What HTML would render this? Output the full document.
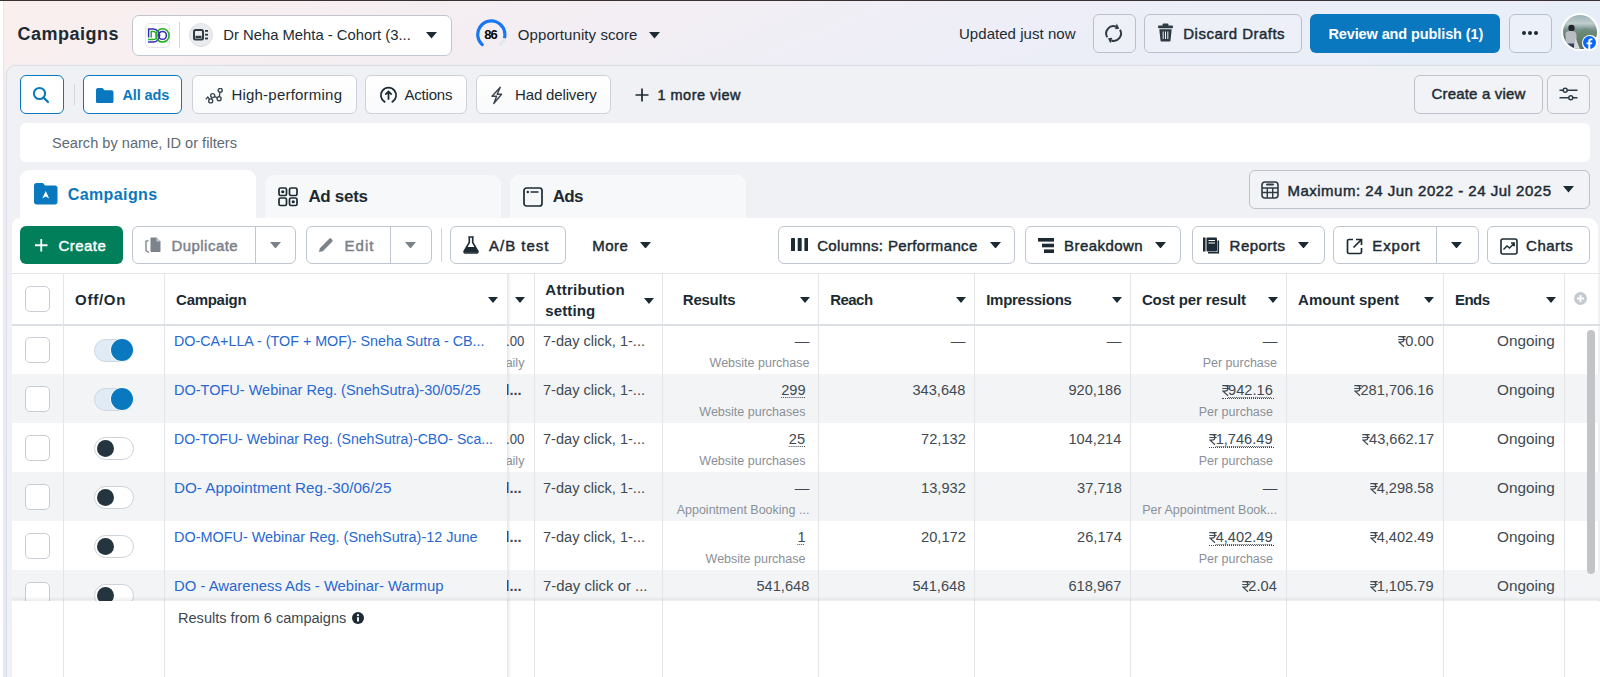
<!DOCTYPE html>
<html><head><meta charset="utf-8"><title>Campaigns</title>
<style>
html,body{margin:0;padding:0;width:1600px;height:677px;overflow:hidden;background:#fff;}
body{position:relative;font-family:"Liberation Sans", sans-serif;}
.t{white-space:nowrap;line-height:1;display:block;}
svg{display:block}
</style></head><body>
<div style="position:absolute;left:0;top:0;width:1600px;height:1px;background:#3b3030"></div><div style="position:absolute;left:4px;top:1px;width:1596px;height:676px;background:linear-gradient(to bottom right,#faefee 0%,#f3eef3 20%,#eeeef7 32%,#e8eef8 50%,#e6eef9 100%)"></div><div style="position:absolute;left:4px;top:65px;width:2px;height:612px;background:linear-gradient(180deg,#f7eef1 0%,#eeedf8 50%,#e3eefb 100%)"></div><div style="position:absolute;left:3px;top:1px;width:1px;height:676px;background:rgba(80,70,110,0.13)"></div><div style="position:absolute;left:6px;top:65px;width:1600px;height:620px;background:#eff1f4;border-top-left-radius:10px;border:1px solid #dcdfe5;box-shadow:0 0 3px rgba(0,0,0,0.05)"></div><div style="position:absolute;left:132px;top:14.5px;width:320px;height:41.5px;background:#fff;border:1px solid #bfc6cf;border-radius:7px;box-sizing:border-box"></div><div style="position:absolute;left:144.5px;top:22.5px;width:25.5px;height:25.5px;background:#fff;border:1px solid #e4e6ea;border-radius:5px;box-sizing:border-box"></div><svg style="position:absolute;left:144px;top:22px" width="28" height="26" viewBox="0 0 28 26"><path d="M4.6 15.5V6.9H9A6.6 6.6 0 0 1 9 20.1H4" fill="none" stroke="#3a2db8" stroke-width="1.5"/><path d="M7.2 15.5V9.4H9A4.1 4.1 0 0 1 9 17.6H4" fill="none" stroke="#22b021" stroke-width="1.5"/><circle cx="18.5" cy="13.4" r="6.6" fill="none" stroke="#22b021" stroke-width="1.6"/><circle cx="18.5" cy="13.4" r="3.9" fill="none" stroke="#3a2db8" stroke-width="1.6"/></svg><div style="position:absolute;left:178.5px;top:22px;width:1px;height:26px;background:#d5d8dd"></div><div style="position:absolute;left:189px;top:23px;width:24px;height:24px;background:#e9ebef;border-radius:50%;border:1px solid #dde0e5;box-sizing:border-box"></div><svg style="position:absolute;left:193px;top:29px" width="16" height="12" viewBox="0 0 16 12"><rect x="1" y="1" width="9" height="9.5" rx="1.5" fill="none" stroke="#2f3b44" stroke-width="2"/><rect x="2.5" y="6.8" width="6" height="2.2" fill="#2f3b44"/><rect x="12" y="1" width="3" height="1.8" fill="#2f3b44"/><rect x="12" y="4.8" width="3" height="1.8" fill="#2f3b44"/><rect x="12" y="8.6" width="3" height="1.8" fill="#2f3b44"/></svg><svg style="position:absolute;left:426.3px;top:32.25px" width="11" height="6.5" viewBox="0 0 11 6.5"><path d="M0 0H11L5.5 6.5Z" fill="#1c2b33"/></svg><svg style="position:absolute;left:475px;top:19px" width="34" height="31" viewBox="0 0 34 31"><path d="M7.20 25.61A13.6 13.6 0 1 1 29.60 18.33" fill="none" stroke="#1877f2" stroke-width="3.2" stroke-linecap="round"/><path d="M28.91 20.59A13.6 13.6 0 0 1 25.58 25.45" fill="none" stroke="#e3e8ef" stroke-width="3.2" stroke-linecap="round"/></svg><svg style="position:absolute;left:649.0px;top:32.25px" width="11" height="6.5" viewBox="0 0 11 6.5"><path d="M0 0H11L5.5 6.5Z" fill="#1c2b33"/></svg><div style="position:absolute;left:1093px;top:13.8px;width:43px;height:39px;border:1px solid #b9c0c9;border-radius:6px;box-sizing:border-box;background:rgba(255,255,255,0.15)"></div><svg style="position:absolute;left:1104px;top:23px" width="20" height="20" viewBox="0 0 20 20"><path d="M11.89 3.46A7.4 7.4 0 0 0 3.19 14.20" fill="none" stroke="#2f3b44" stroke-width="2"/><path d="M10.96 6.32L12.81 0.61L15.27 5.74Z" fill="#2f3b44"/><path d="M7.31 17.54A7.4 7.4 0 0 0 16.01 6.80" fill="none" stroke="#2f3b44" stroke-width="2"/><path d="M8.24 14.68L6.39 20.39L3.93 15.26Z" fill="#2f3b44"/></svg><div style="position:absolute;left:1143.6px;top:13.8px;width:158px;height:39px;border:1px solid #b9c0c9;border-radius:6px;box-sizing:border-box;background:rgba(255,255,255,0.15)"></div><svg style="position:absolute;left:1157px;top:23px" width="17" height="19" viewBox="0 0 17 19"><rect x="5.5" y="0.5" width="6" height="2.5" rx="1" fill="#2f3b44"/><rect x="1" y="2.6" width="15" height="2.6" rx="1" fill="#2f3b44"/><path d="M2.3 6.2H14.7L13.5 17.6C13.4 18.3 12.9 18.6 12.3 18.6H4.7C4.1 18.6 3.6 18.3 3.5 17.6Z" fill="#2f3b44"/><path d="M6.2 8.5V16M8.5 8.5V16M10.8 8.5V16" stroke="#eef0f5" stroke-width="1"/></svg><div style="position:absolute;left:1310px;top:13.6px;width:190px;height:39px;background:#0a78be;border-radius:6px"></div><div style="position:absolute;left:1509.3px;top:13.8px;width:42.6px;height:39px;border:1px solid #b9c0c9;border-radius:6px;box-sizing:border-box;background:rgba(255,255,255,0.15)"></div><svg style="position:absolute;left:1521px;top:30px" width="18" height="6" viewBox="0 0 18 6"><circle cx="3" cy="3" r="2" fill="#1c2b33"/><circle cx="9" cy="3" r="2" fill="#1c2b33"/><circle cx="15" cy="3" r="2" fill="#1c2b33"/></svg><div style="position:absolute;left:1561px;top:13px;width:38px;height:38px;background:#fff;border-radius:50%"></div><svg style="position:absolute;left:1563px;top:15px" width="34" height="34" viewBox="0 0 34 34"><defs><clipPath id="av"><circle cx="17" cy="17" r="17"/></clipPath><linearGradient id="sky" x1="0" y1="0" x2="0" y2="1"><stop offset="0" stop-color="#9db3b8"/><stop offset="0.25" stop-color="#bfcdcc"/><stop offset="0.42" stop-color="#7d9592"/><stop offset="0.65" stop-color="#5a7361"/><stop offset="1" stop-color="#2c3633"/></linearGradient></defs><g clip-path="url(#av)"><rect width="34" height="34" fill="url(#sky)"/><path d="M12 19L22 13L34 17V34H12Z" fill="#6b8a72" opacity="0.7"/><circle cx="8.5" cy="13" r="3.2" fill="#25262b"/><path d="M2.5 18C3 16.5 5.5 16 8.5 16C11.5 16 13.5 17.5 13.5 20V34H2.5Z" fill="#b9bcc0"/><path d="M12.5 23L17 34H11Z" fill="#d6d8d9"/><path d="M4 28.5H11V34H4Z" fill="#2f4060"/></g></svg><div style="position:absolute;left:1581.5px;top:34.5px;width:16px;height:16px;background:#fff;border-radius:50%"></div><svg style="position:absolute;left:1583px;top:36px" width="13" height="13" viewBox="0 0 13 13"><circle cx="6.5" cy="6.5" r="6.5" fill="#0866ff"/><path d="M7.3 13V8.3H9L9.3 6.4H7.3V5.3C7.3 4.7 7.6 4.3 8.4 4.3H9.4V2.6C9.1 2.6 8.5 2.5 7.8 2.5C6.3 2.5 5.3 3.4 5.3 5V6.4H3.6V8.3H5.3V13Z" fill="#fff"/></svg><div style="position:absolute;left:19.5px;top:75.2px;width:44.7px;height:39px;background:#fff;border:1.5px solid #0a78be;border-radius:6px;box-sizing:border-box"></div><svg style="position:absolute;left:32px;top:86px" width="18" height="18" viewBox="0 0 18 18"><circle cx="7.5" cy="7.5" r="5.6" fill="none" stroke="#0a78be" stroke-width="2"/><path d="M11.6 11.6L16 16" stroke="#0a78be" stroke-width="2.2" stroke-linecap="round"/></svg><div style="position:absolute;left:73.5px;top:84px;width:1px;height:21px;background:#d3d7dc"></div><div style="position:absolute;left:83.2px;top:75.2px;width:99.2px;height:39.3px;background:#fff;border:1.5px solid #0a78be;border-radius:6px;box-sizing:border-box"></div><svg style="position:absolute;left:96px;top:87.5px" width="17.5" height="15.5" viewBox="0 0 17.5 15.5"><path d="M0 2C0 0.9 0.9 0 2 0H6.5L8.5 2.2H15.5C16.6 2.2 17.5 3.1 17.5 4.2V13.5C17.5 14.6 16.6 15.5 15.5 15.5H2C0.9 15.5 0 14.6 0 13.5Z" fill="#0a78be"/></svg><div style="position:absolute;left:192px;top:75.3px;width:164.5px;height:39px;background:linear-gradient(180deg,#ffffff,#f9fafb);border:1px solid #cdd2d9;border-radius:6px;box-sizing:border-box"></div><div style="position:absolute;left:365px;top:75.3px;width:101.80000000000001px;height:39px;background:linear-gradient(180deg,#ffffff,#f9fafb);border:1px solid #cdd2d9;border-radius:6px;box-sizing:border-box"></div><div style="position:absolute;left:475.5px;top:75.3px;width:135.0px;height:39px;background:linear-gradient(180deg,#ffffff,#f9fafb);border:1px solid #cdd2d9;border-radius:6px;box-sizing:border-box"></div><svg style="position:absolute;left:204.5px;top:87.5px" width="18" height="16" viewBox="0 0 18 16"><path d="M0.8 11.3L2.8 9.1L5.7 12.9L7.7 7.6L14.1 10.7L15.2 2.3" fill="none" stroke="#3b4650" stroke-width="1.3"/><circle cx="5.7" cy="12.9" r="2" fill="#fff" stroke="#3b4650" stroke-width="1.4"/><circle cx="7.7" cy="7.6" r="2" fill="#fff" stroke="#3b4650" stroke-width="1.4"/><circle cx="14.1" cy="10.7" r="2" fill="#fff" stroke="#3b4650" stroke-width="1.4"/><circle cx="15.2" cy="2.3" r="2" fill="#fff" stroke="#3b4650" stroke-width="1.4"/></svg><svg style="position:absolute;left:379px;top:86px" width="19" height="19" viewBox="0 0 19 19"><path d="M5.7 15.9A7.6 7.6 0 1 1 13.3 15.9" fill="none" stroke="#1c2b33" stroke-width="1.8" stroke-linecap="round"/><path d="M9.5 13.8V5.6M6.3 8.6L9.5 5.4L12.7 8.6" fill="none" stroke="#1c2b33" stroke-width="1.8"/></svg><svg style="position:absolute;left:489px;top:86px" width="15" height="19" viewBox="0 0 15 19"><path d="M11.3 1.3L3 10.3H7.6L4.8 17.5L12.6 8.3H8.2Z" fill="none" stroke="#3b4650" stroke-width="1.4" stroke-linejoin="round"/></svg><svg style="position:absolute;left:634.5px;top:88px" width="14" height="14" viewBox="0 0 14 14"><path d="M7 0.5V13.5M0.5 7H13.5" stroke="#1c2b33" stroke-width="1.7"/></svg><div style="position:absolute;left:1414px;top:75px;width:128.6px;height:38.5px;border:1px solid #bcc3cc;border-radius:6px;box-sizing:border-box;background:rgba(255,255,255,0.2)"></div><div style="position:absolute;left:1547px;top:75px;width:42.5px;height:38.5px;border:1px solid #bcc3cc;border-radius:6px;box-sizing:border-box;background:rgba(255,255,255,0.2)"></div><svg style="position:absolute;left:1559px;top:86px" width="19" height="16" viewBox="0 0 19 16"><path d="M0.5 4.2H4.2M8.2 4.2H18.5M0.5 11.7H9.8M13.8 11.7H18.5" stroke="#2f3b44" stroke-width="1.5"/><circle cx="6.2" cy="4.2" r="2" fill="none" stroke="#2f3b44" stroke-width="1.5"/><circle cx="11.8" cy="11.7" r="2" fill="none" stroke="#2f3b44" stroke-width="1.5"/></svg><div style="position:absolute;left:19.5px;top:123.3px;width:1570.5px;height:39px;background:#fff;border-radius:6px"></div><div style="position:absolute;left:264.7px;top:174.8px;width:236.5px;height:50px;background:#f7f8fa;border-radius:9px 9px 0 0"></div><div style="position:absolute;left:509.7px;top:174.8px;width:236.5px;height:50px;background:#f7f8fa;border-radius:9px 9px 0 0"></div><div style="position:absolute;left:1248.5px;top:170.4px;width:341.1px;height:38.2px;border:1px solid #bcc3cc;border-radius:6px;box-sizing:border-box;background:rgba(255,255,255,0.2)"></div><div style="position:absolute;left:12px;top:217.5px;width:1586px;height:470px;background:#fff;border-radius:8px 10px 0 0"></div><div style="position:absolute;left:19.5px;top:170.2px;width:236.3px;height:60px;background:#fff;border-radius:9px 9px 0 0"></div><svg style="position:absolute;left:34px;top:183px" width="23.5" height="21.5" viewBox="0 0 23.5 21.5"><path d="M0 2.5C0 1.1 1.1 0 2.5 0H9L11 2.5H21C22.4 2.5 23.5 3.6 23.5 5V19C23.5 20.4 22.4 21.5 21 21.5H2.5C1.1 21.5 0 20.4 0 19Z" fill="#0a78be"/><path d="M11.75 8L15.2 15.5L11.75 13.6L8.3 15.5Z" fill="#fff"/></svg><svg style="position:absolute;left:278px;top:186.7px" width="21" height="20" viewBox="0 0 21 20"><rect x="1" y="1" width="7.5" height="7.5" rx="1.5" fill="none" stroke="#1c2b33" stroke-width="1.7"/><rect x="11.5" y="1" width="7.5" height="7.5" rx="1.5" fill="none" stroke="#1c2b33" stroke-width="1.7"/><rect x="1" y="11" width="7.5" height="7.5" rx="1.5" fill="none" stroke="#1c2b33" stroke-width="1.7"/><rect x="11.5" y="11" width="7.5" height="7.5" rx="1.5" fill="none" stroke="#1c2b33" stroke-width="1.7"/><circle cx="4.75" cy="4.75" r="1.6" fill="#1c2b33"/><circle cx="15.25" cy="14.75" r="1.6" fill="#1c2b33"/></svg><svg style="position:absolute;left:523px;top:186.5px" width="20" height="20" viewBox="0 0 20 20"><rect x="1" y="1" width="18" height="18" rx="2.5" fill="none" stroke="#1c2b33" stroke-width="1.7"/><circle cx="4.8" cy="5" r="1.2" fill="#1c2b33"/><path d="M7.5 5H15.5" stroke="#1c2b33" stroke-width="1.5"/></svg><svg style="position:absolute;left:1261px;top:181px" width="18" height="18" viewBox="0 0 18 18"><rect x="1" y="1" width="16" height="16" rx="3" fill="none" stroke="#2f3b44" stroke-width="1.6"/><rect x="5" y="2.5" width="8" height="2" rx="1" fill="#2f3b44"/><path d="M1 7H17M1 11.5H17M6.3 7V17M11.7 7V17" stroke="#2f3b44" stroke-width="1.4"/></svg><svg style="position:absolute;left:1563.0px;top:186.25px" width="11" height="6.5" viewBox="0 0 11 6.5"><path d="M0 0H11L5.5 6.5Z" fill="#1c2b33"/></svg><div style="position:absolute;left:19.8px;top:225.9px;width:103px;height:38px;background:#007f5a;border-radius:6px"></div><svg style="position:absolute;left:35px;top:239px" width="12.5" height="12.5" viewBox="0 0 12.5 12.5"><path d="M6.25 0V12.5M0 6.25H12.5" stroke="#fff" stroke-width="1.8"/></svg><div style="position:absolute;left:132.2px;top:226px;width:164.2px;height:38px;border:1px solid #bfc6cf;border-radius:6px;box-sizing:border-box;background:#fff"></div><div style="position:absolute;left:254.6px;top:227px;width:1px;height:36px;background:#bfc6cf"></div><svg style="position:absolute;left:144px;top:237px" width="18" height="16" viewBox="0 0 18 16"><path d="M4.5 3.5L2 4.3V13.5L5 15.5" fill="none" stroke="#8a8f96" stroke-width="1.5"/><path d="M6.5 1.3C6.5 0.8 6.9 0.5 7.4 0.5H12.5L16.5 4.5V14C16.5 14.5 16.1 15 15.5 15H7.5C6.9 15 6.5 14.5 6.5 14Z" fill="#7d838a"/><path d="M12.5 0.5V4.5H16.5" fill="#c8ccd1"/></svg><svg style="position:absolute;left:270.1px;top:241.95px" width="11" height="6.5" viewBox="0 0 11 6.5"><path d="M0 0H11L5.5 6.5Z" fill="#7b8189"/></svg><div style="position:absolute;left:306px;top:226px;width:125.80000000000001px;height:38px;border:1px solid #bfc6cf;border-radius:6px;box-sizing:border-box;background:#fff"></div><div style="position:absolute;left:390px;top:227px;width:1px;height:36px;background:#bfc6cf"></div><svg style="position:absolute;left:318px;top:237px" width="16" height="16" viewBox="0 0 16 16"><path d="M1 15L1.8 11.2L11.2 1.8C11.8 1.2 12.7 1.2 13.3 1.8L14.2 2.7C14.8 3.3 14.8 4.2 14.2 4.8L4.8 14.2Z" fill="#7d838a"/></svg><svg style="position:absolute;left:404.7px;top:241.95px" width="11" height="6.5" viewBox="0 0 11 6.5"><path d="M0 0H11L5.5 6.5Z" fill="#7b8189"/></svg><div style="position:absolute;left:440.5px;top:228px;width:1px;height:34px;background:#d3d7dc"></div><div style="position:absolute;left:450.1px;top:226px;width:115.5px;height:38px;border:1px solid #bfc6cf;border-radius:6px;box-sizing:border-box;background:#fff"></div><svg style="position:absolute;left:463px;top:236px" width="16" height="18" viewBox="0 0 16 18"><path d="M5.3 1H10.7M6.3 1V6.5L1.2 15.2C0.8 16 1.3 17 2.2 17H13.8C14.7 17 15.2 16 14.8 15.2L9.7 6.5V1" fill="none" stroke="#1c2b33" stroke-width="1.6"/><path d="M3.6 11H12.4L14.6 15.6C14.9 16.2 14.6 16.6 14 16.6H2C1.4 16.6 1.1 16.2 1.4 15.6Z" fill="#1c2b33"/></svg><svg style="position:absolute;left:639.8px;top:241.95px" width="11" height="6.5" viewBox="0 0 11 6.5"><path d="M0 0H11L5.5 6.5Z" fill="#1c2b33"/></svg><div style="position:absolute;left:778.4px;top:226px;width:237.0px;height:38px;border:1px solid #bfc6cf;border-radius:6px;box-sizing:border-box;background:#fff"></div><div style="position:absolute;left:1025.4px;top:226px;width:155.89999999999986px;height:38px;border:1px solid #bfc6cf;border-radius:6px;box-sizing:border-box;background:#fff"></div><div style="position:absolute;left:1191.5px;top:226px;width:133.0999999999999px;height:38px;border:1px solid #bfc6cf;border-radius:6px;box-sizing:border-box;background:#fff"></div><div style="position:absolute;left:1487.2px;top:226px;width:102.5px;height:38px;border:1px solid #bfc6cf;border-radius:6px;box-sizing:border-box;background:#fff"></div><div style="position:absolute;left:1332.9px;top:226px;width:145.69999999999982px;height:38px;border:1px solid #bfc6cf;border-radius:6px;box-sizing:border-box;background:#fff"></div><div style="position:absolute;left:1436.1px;top:227px;width:1px;height:36px;background:#bfc6cf"></div><svg style="position:absolute;left:790.5px;top:238.3px" width="17.5" height="13.2" viewBox="0 0 17.5 13.2"><rect x="0" y="0" width="4" height="13.2" rx="0.8" fill="#1c2b33"/><rect x="6.7" y="0" width="4" height="13.2" rx="0.8" fill="#1c2b33"/><rect x="13.4" y="0" width="4" height="13.2" rx="0.8" fill="#1c2b33"/></svg><svg style="position:absolute;left:990.0px;top:241.95px" width="11" height="6.5" viewBox="0 0 11 6.5"><path d="M0 0H11L5.5 6.5Z" fill="#1c2b33"/></svg><svg style="position:absolute;left:1038px;top:237.5px" width="16.5" height="15" viewBox="0 0 16.5 15"><rect x="0" y="0" width="16" height="3.6" fill="#1c2b33"/><rect x="4" y="5.7" width="12" height="3.6" fill="#1c2b33"/><rect x="6" y="11.4" width="10" height="3.6" fill="#1c2b33"/></svg><svg style="position:absolute;left:1154.9px;top:241.95px" width="11" height="6.5" viewBox="0 0 11 6.5"><path d="M0 0H11L5.5 6.5Z" fill="#1c2b33"/></svg><svg style="position:absolute;left:1202.5px;top:236.5px" width="18" height="17" viewBox="0 0 18 17"><rect x="0" y="0.5" width="2.5" height="14" fill="#1c2b33"/><rect x="3.5" y="0.5" width="10.5" height="14" rx="1" fill="#1c2b33"/><path d="M5.5 3.5H12M5.5 6H12" stroke="#fff" stroke-width="1.1"/><path d="M15.3 3.5V15.8H5" fill="none" stroke="#1c2b33" stroke-width="1.6"/></svg><svg style="position:absolute;left:1297.5px;top:241.95px" width="11" height="6.5" viewBox="0 0 11 6.5"><path d="M0 0H11L5.5 6.5Z" fill="#1c2b33"/></svg><svg style="position:absolute;left:1346px;top:237.5px" width="17" height="17" viewBox="0 0 17 17"><path d="M7 1.5H3C2.2 1.5 1.5 2.2 1.5 3V14C1.5 14.8 2.2 15.5 3 15.5H14C14.8 15.5 15.5 14.8 15.5 14V10" fill="none" stroke="#1c2b33" stroke-width="1.7"/><path d="M7.5 9.5L15 2M10 1.5H15.5V7" fill="none" stroke="#1c2b33" stroke-width="1.7"/></svg><svg style="position:absolute;left:1451.3px;top:241.95px" width="11" height="6.5" viewBox="0 0 11 6.5"><path d="M0 0H11L5.5 6.5Z" fill="#1c2b33"/></svg><svg style="position:absolute;left:1499.5px;top:237.5px" width="18" height="17" viewBox="0 0 18 17"><rect x="1" y="1" width="16" height="15" rx="2" fill="none" stroke="#1c2b33" stroke-width="1.6"/><path d="M3.5 11.5L7 8L9.5 10L14 5.5M11 5H14.2V8.2" fill="none" stroke="#1c2b33" stroke-width="1.4"/></svg><div style="position:absolute;left:11.6px;top:273.4px;width:1590px;height:1px;background:#e3e5e9"></div><div style="position:absolute;left:11.6px;top:324.4px;width:1590px;height:1.5px;background:#dcdfe3"></div><div style="position:absolute;left:11.6px;top:374.4px;width:1590px;height:49px;background:#f3f4f6"></div><div style="position:absolute;left:11.6px;top:472.4px;width:1590px;height:49px;background:#f3f4f6"></div><div style="position:absolute;left:11.6px;top:570.4px;width:1590px;height:30.100000000000023px;background:#f3f4f6"></div><div style="position:absolute;left:63px;top:273.4px;width:1px;height:403.6px;background:#e3e5e9"></div><div style="position:absolute;left:164.2px;top:273.4px;width:1px;height:403.6px;background:#e3e5e9"></div><div style="position:absolute;left:533.8px;top:273.4px;width:1px;height:403.6px;background:#e3e5e9"></div><div style="position:absolute;left:662.3px;top:273.4px;width:1px;height:403.6px;background:#e3e5e9"></div><div style="position:absolute;left:818.4px;top:273.4px;width:1px;height:403.6px;background:#e3e5e9"></div><div style="position:absolute;left:974.3px;top:273.4px;width:1px;height:403.6px;background:#e3e5e9"></div><div style="position:absolute;left:1130.3px;top:273.4px;width:1px;height:403.6px;background:#e3e5e9"></div><div style="position:absolute;left:1286px;top:273.4px;width:1px;height:403.6px;background:#e3e5e9"></div><div style="position:absolute;left:1442.7px;top:273.4px;width:1px;height:403.6px;background:#e3e5e9"></div><div style="position:absolute;left:1563.9px;top:273.4px;width:1px;height:403.6px;background:#e3e5e9"></div><div style="position:absolute;left:507px;top:273.4px;width:4px;height:403.6px;background:linear-gradient(90deg,#e3e5e9,rgba(230,232,236,0))"></div><div style="position:absolute;left:25.3px;top:286.2px;width:24.5px;height:25.5px;border:1px solid #c9cdd3;border-radius:5px;box-sizing:border-box;background:#fff"></div><svg style="position:absolute;left:488.2px;top:296.5px" width="10" height="6" viewBox="0 0 10 6"><path d="M0 0H10L5.0 6Z" fill="#1c2b33"/></svg><svg style="position:absolute;left:515.0px;top:296.5px" width="10" height="6" viewBox="0 0 10 6"><path d="M0 0H10L5.0 6Z" fill="#1c2b33"/></svg><svg style="position:absolute;left:644.3px;top:297.5px" width="10" height="6" viewBox="0 0 10 6"><path d="M0 0H10L5.0 6Z" fill="#1c2b33"/></svg><svg style="position:absolute;left:800.2px;top:296.5px" width="10" height="6" viewBox="0 0 10 6"><path d="M0 0H10L5.0 6Z" fill="#1c2b33"/></svg><svg style="position:absolute;left:956.0px;top:296.5px" width="10" height="6" viewBox="0 0 10 6"><path d="M0 0H10L5.0 6Z" fill="#1c2b33"/></svg><svg style="position:absolute;left:1112.2px;top:296.5px" width="10" height="6" viewBox="0 0 10 6"><path d="M0 0H10L5.0 6Z" fill="#1c2b33"/></svg><svg style="position:absolute;left:1268.0px;top:296.5px" width="10" height="6" viewBox="0 0 10 6"><path d="M0 0H10L5.0 6Z" fill="#1c2b33"/></svg><svg style="position:absolute;left:1423.8px;top:296.5px" width="10" height="6" viewBox="0 0 10 6"><path d="M0 0H10L5.0 6Z" fill="#1c2b33"/></svg><svg style="position:absolute;left:1545.6px;top:296.5px" width="10" height="6" viewBox="0 0 10 6"><path d="M0 0H10L5.0 6Z" fill="#1c2b33"/></svg><svg style="position:absolute;left:1574px;top:292.3px" width="13" height="13" viewBox="0 0 13 13"><circle cx="6.5" cy="6.5" r="6.5" fill="#c5cad1"/><path d="M6.5 3V10M3 6.5H10" stroke="#fff" stroke-width="1.8"/></svg><div style="position:absolute;left:25.3px;top:337.2px;width:24.5px;height:25.5px;border:1px solid #c9cdd3;border-radius:5px;box-sizing:border-box;background:#fff"></div><div style="position:absolute;left:93.6px;top:338.7px;width:40px;height:23px;background:#e1ebf5;border:1px solid #cfd8e1;border-radius:12px;box-sizing:border-box"></div><div style="position:absolute;left:111.3px;top:338.59999999999997px;width:22px;height:22px;background:#0a78be;border-radius:50%;box-shadow:0 0 0 0.8px #fff"></div><div style="position:absolute;left:507px;top:325.4px;width:27px;height:49px;overflow:hidden"><span class="t" style="position:absolute;right:9.600000000000023px;top:8.05px;font-size:15.3px;color:#414a52;transform:scaleX(0.86);transform-origin:right center">.00</span><span class="t" style="position:absolute;right:9.600000000000023px;top:31.22px;font-size:12.5px;color:#8a9098">aily</span></div><div style="position:absolute;left:25.3px;top:386.2px;width:24.5px;height:25.5px;border:1px solid #c9cdd3;border-radius:5px;box-sizing:border-box;background:#fff"></div><div style="position:absolute;left:93.6px;top:387.7px;width:40px;height:23px;background:#e1ebf5;border:1px solid #cfd8e1;border-radius:12px;box-sizing:border-box"></div><div style="position:absolute;left:111.3px;top:387.59999999999997px;width:22px;height:22px;background:#0a78be;border-radius:50%;box-shadow:0 0 0 0.8px #fff"></div><div style="position:absolute;left:507px;top:374.4px;width:27px;height:49px;overflow:hidden"><span class="t" style="position:absolute;right:12.399999999999977px;top:8.64px;font-size:14.6px;font-weight:700;color:#414a52">d...</span></div><div style="position:absolute;left:25.3px;top:435.2px;width:24.5px;height:25.5px;border:1px solid #c9cdd3;border-radius:5px;box-sizing:border-box;background:#fff"></div><div style="position:absolute;left:93.6px;top:436.9px;width:40px;height:23px;background:#fff;border:1px solid #cdd3da;border-radius:12px;box-sizing:border-box"></div><div style="position:absolute;left:96.8px;top:439.9px;width:17px;height:17px;background:#25353f;border-radius:50%"></div><div style="position:absolute;left:507px;top:423.4px;width:27px;height:49px;overflow:hidden"><span class="t" style="position:absolute;right:9.600000000000023px;top:8.05px;font-size:15.3px;color:#414a52;transform:scaleX(0.86);transform-origin:right center">.00</span><span class="t" style="position:absolute;right:9.600000000000023px;top:31.22px;font-size:12.5px;color:#8a9098">aily</span></div><div style="position:absolute;left:25.3px;top:484.2px;width:24.5px;height:25.5px;border:1px solid #c9cdd3;border-radius:5px;box-sizing:border-box;background:#fff"></div><div style="position:absolute;left:93.6px;top:485.9px;width:40px;height:23px;background:#fff;border:1px solid #cdd3da;border-radius:12px;box-sizing:border-box"></div><div style="position:absolute;left:96.8px;top:488.9px;width:17px;height:17px;background:#25353f;border-radius:50%"></div><div style="position:absolute;left:507px;top:472.4px;width:27px;height:49px;overflow:hidden"><span class="t" style="position:absolute;right:12.399999999999977px;top:8.64px;font-size:14.6px;font-weight:700;color:#414a52">d...</span></div><div style="position:absolute;left:25.3px;top:533.1999999999999px;width:24.5px;height:25.5px;border:1px solid #c9cdd3;border-radius:5px;box-sizing:border-box;background:#fff"></div><div style="position:absolute;left:93.6px;top:534.9px;width:40px;height:23px;background:#fff;border:1px solid #cdd3da;border-radius:12px;box-sizing:border-box"></div><div style="position:absolute;left:96.8px;top:537.9px;width:17px;height:17px;background:#25353f;border-radius:50%"></div><div style="position:absolute;left:507px;top:521.4px;width:27px;height:49px;overflow:hidden"><span class="t" style="position:absolute;right:12.399999999999977px;top:8.64px;font-size:14.6px;font-weight:700;color:#414a52">d...</span></div><div style="position:absolute;left:25.3px;top:582.1999999999999px;width:24.5px;height:25.5px;border:1px solid #c9cdd3;border-radius:5px;box-sizing:border-box;background:#fff"></div><div style="position:absolute;left:93.6px;top:583.9px;width:40px;height:23px;background:#fff;border:1px solid #cdd3da;border-radius:12px;box-sizing:border-box"></div><div style="position:absolute;left:96.8px;top:586.9px;width:17px;height:17px;background:#25353f;border-radius:50%"></div><div style="position:absolute;left:507px;top:570.4px;width:27px;height:49px;overflow:hidden"><span class="t" style="position:absolute;right:12.399999999999977px;top:8.64px;font-size:14.6px;font-weight:700;color:#414a52">d...</span></div><div style="position:absolute;left:11.6px;top:600.5px;width:1590px;height:77px;background:#fff"></div><div style="position:absolute;left:11.6px;top:595.5px;width:1590px;height:5px;background:linear-gradient(180deg,rgba(0,0,0,0),rgba(0,0,0,0.07))"></div><div style="position:absolute;left:63px;top:600.5px;width:1px;height:77px;background:#e3e5e9"></div><div style="position:absolute;left:164.2px;top:600.5px;width:1px;height:77px;background:#e3e5e9"></div><div style="position:absolute;left:533.8px;top:600.5px;width:1px;height:77px;background:#e3e5e9"></div><div style="position:absolute;left:662.3px;top:600.5px;width:1px;height:77px;background:#e3e5e9"></div><div style="position:absolute;left:818.4px;top:600.5px;width:1px;height:77px;background:#e3e5e9"></div><div style="position:absolute;left:974.3px;top:600.5px;width:1px;height:77px;background:#e3e5e9"></div><div style="position:absolute;left:1130.3px;top:600.5px;width:1px;height:77px;background:#e3e5e9"></div><div style="position:absolute;left:1286px;top:600.5px;width:1px;height:77px;background:#e3e5e9"></div><div style="position:absolute;left:1442.7px;top:600.5px;width:1px;height:77px;background:#e3e5e9"></div><div style="position:absolute;left:1563.9px;top:600.5px;width:1px;height:77px;background:#e3e5e9"></div><div style="position:absolute;left:507px;top:600.5px;width:4px;height:77px;background:linear-gradient(90deg,#e3e5e9,rgba(230,232,236,0))"></div><svg style="position:absolute;left:351.5px;top:611.7px" width="12" height="12" viewBox="0 0 12 12"><circle cx="6" cy="6" r="6" fill="#1c2b33"/><circle cx="6" cy="3.2" r="1.1" fill="#fff"/><path d="M6 5.3V9.5" stroke="#fff" stroke-width="1.9"/></svg><div style="position:absolute;left:1587px;top:329.8px;width:7.5px;height:244.5px;background:#c2c4c7;border-radius:4px"></div>
<span id="t0" class="t" style="position:absolute;top:24.51px;font-size:18px;font-weight:700;color:#1c2b33;letter-spacing:0.496px;;left:17.50px;">Campaigns</span><span id="t1" class="t" style="position:absolute;top:28.27px;font-size:14.8px;font-weight:400;color:#1c2b33;letter-spacing:0.000px;;left:223.30px;">Dr Neha Mehta - Cohort (3...</span><span id="t2" class="t" style="position:absolute;top:27.70px;font-size:13px;font-weight:700;color:#050505;letter-spacing:-0.969px;;left:484.30px;">86</span><span id="t3" class="t" style="position:absolute;top:26.90px;font-size:15px;font-weight:400;color:#1c2b33;letter-spacing:0.076px;;left:517.80px;">Opportunity score</span><span id="t4" class="t" style="position:absolute;top:25.50px;font-size:15px;font-weight:400;color:#1c2b33;letter-spacing:0.040px;;left:959.00px;">Updated just now</span><span id="t5" class="t" style="position:absolute;top:26.20px;font-size:15px;font-weight:400;-webkit-text-stroke:0.45px #1c2b33;color:#1c2b33;letter-spacing:0.482px;;left:1183.30px;">Discard Drafts</span><span id="t6" class="t" style="position:absolute;top:26.63px;font-size:14.5px;font-weight:700;color:#ffffff;letter-spacing:-0.105px;;left:1328.40px;">Review and publish (1)</span><span id="t7" class="t" style="position:absolute;top:87.73px;font-size:14.5px;font-weight:700;color:#0a78be;letter-spacing:-0.133px;;left:122.50px;">All ads</span><span id="t8" class="t" style="position:absolute;top:87.30px;font-size:15px;font-weight:400;color:#1c2b33;letter-spacing:0.218px;;left:231.40px;">High-performing</span><span id="t9" class="t" style="position:absolute;top:87.30px;font-size:15px;font-weight:400;color:#1c2b33;letter-spacing:-0.201px;;left:404.50px;">Actions</span><span id="t10" class="t" style="position:absolute;top:87.30px;font-size:15px;font-weight:400;color:#1c2b33;letter-spacing:-0.148px;;left:515.00px;">Had delivery</span><span id="t11" class="t" style="position:absolute;top:87.73px;font-size:14.5px;font-weight:400;-webkit-text-stroke:0.45px #1c2b33;color:#1c2b33;letter-spacing:0.483px;;left:657.50px;">1 more view</span><span id="t12" class="t" style="position:absolute;top:86.10px;font-size:15px;font-weight:400;-webkit-text-stroke:0.45px #1c2b33;color:#1c2b33;letter-spacing:0.173px;;left:1431.50px;">Create a view</span><span id="t13" class="t" style="position:absolute;top:134.80px;font-size:15.3px;font-weight:400;color:#606a74;letter-spacing:0.000px;;left:52.25px;transform:scaleX(0.9544);transform-origin:left center;">Search by name, ID or filters</span><span id="t14" class="t" style="position:absolute;top:186.71px;font-size:16px;font-weight:700;color:#0a78be;letter-spacing:0.406px;;left:67.70px;">Campaigns</span><span id="t15" class="t" style="position:absolute;top:188.01px;font-size:17px;font-weight:700;color:#1c2b33;letter-spacing:-0.304px;;left:308.40px;">Ad sets</span><span id="t16" class="t" style="position:absolute;top:188.01px;font-size:17px;font-weight:700;color:#1c2b33;letter-spacing:-0.762px;;left:552.80px;">Ads</span><span id="t17" class="t" style="position:absolute;top:182.50px;font-size:15px;font-weight:400;-webkit-text-stroke:0.45px #1c2b33;color:#1c2b33;letter-spacing:0.509px;;left:1287.40px;">Maximum: 24 Jun 2022 - 24 Jul 2025</span><span id="t18" class="t" style="position:absolute;top:238.20px;font-size:15px;font-weight:400;-webkit-text-stroke:0.45px #ffffff;color:#ffffff;letter-spacing:0.434px;;left:58.60px;">Create</span><span id="t19" class="t" style="position:absolute;top:238.20px;font-size:15px;font-weight:400;-webkit-text-stroke:0.45px #7b8189;color:#7b8189;letter-spacing:0.469px;;left:171.40px;">Duplicate</span><span id="t20" class="t" style="position:absolute;top:238.20px;font-size:15px;font-weight:400;-webkit-text-stroke:0.45px #7b8189;color:#7b8189;letter-spacing:1.047px;;left:344.50px;">Edit</span><span id="t21" class="t" style="position:absolute;top:238.20px;font-size:15px;font-weight:400;-webkit-text-stroke:0.45px #1c2b33;color:#1c2b33;letter-spacing:0.996px;;left:489.00px;">A/B test</span><span id="t22" class="t" style="position:absolute;top:238.20px;font-size:15px;font-weight:400;-webkit-text-stroke:0.45px #1c2b33;color:#1c2b33;letter-spacing:0.471px;;left:592.30px;">More</span><span id="t23" class="t" style="position:absolute;top:238.20px;font-size:15px;font-weight:400;-webkit-text-stroke:0.45px #1c2b33;color:#1c2b33;letter-spacing:0.352px;;left:817.20px;">Columns: Performance</span><span id="t24" class="t" style="position:absolute;top:238.20px;font-size:15px;font-weight:400;-webkit-text-stroke:0.45px #1c2b33;color:#1c2b33;letter-spacing:0.457px;;left:1064.00px;">Breakdown</span><span id="t25" class="t" style="position:absolute;top:238.20px;font-size:15px;font-weight:400;-webkit-text-stroke:0.45px #1c2b33;color:#1c2b33;letter-spacing:0.461px;;left:1229.60px;">Reports</span><span id="t26" class="t" style="position:absolute;top:238.20px;font-size:15px;font-weight:400;-webkit-text-stroke:0.45px #1c2b33;color:#1c2b33;letter-spacing:0.828px;;left:1372.30px;">Export</span><span id="t27" class="t" style="position:absolute;top:238.20px;font-size:15px;font-weight:400;-webkit-text-stroke:0.45px #1c2b33;color:#1c2b33;letter-spacing:0.503px;;left:1526.10px;">Charts</span><span id="t28" class="t" style="position:absolute;top:291.90px;font-size:15px;font-weight:700;color:#1c2b33;letter-spacing:0.749px;;left:75.00px;">Off/On</span><span id="t29" class="t" style="position:absolute;top:291.90px;font-size:15px;font-weight:700;color:#1c2b33;letter-spacing:-0.288px;;left:176.10px;">Campaign</span><span id="t30" class="t" style="position:absolute;top:282.40px;font-size:15px;font-weight:700;color:#1c2b33;letter-spacing:0.266px;;left:545.30px;">Attribution</span><span id="t31" class="t" style="position:absolute;top:303.00px;font-size:15px;font-weight:700;color:#1c2b33;letter-spacing:0.121px;;left:545.30px;">setting</span><span id="t32" class="t" style="position:absolute;top:291.90px;font-size:15px;font-weight:700;color:#1c2b33;letter-spacing:-0.231px;;left:682.80px;">Results</span><span id="t33" class="t" style="position:absolute;top:291.90px;font-size:15px;font-weight:700;color:#1c2b33;letter-spacing:-0.533px;;left:830.20px;">Reach</span><span id="t34" class="t" style="position:absolute;top:291.90px;font-size:15px;font-weight:700;color:#1c2b33;letter-spacing:-0.267px;;left:986.20px;">Impressions</span><span id="t35" class="t" style="position:absolute;top:291.90px;font-size:15px;font-weight:700;color:#1c2b33;letter-spacing:-0.119px;;left:1141.90px;">Cost per result</span><span id="t36" class="t" style="position:absolute;top:291.90px;font-size:15px;font-weight:700;color:#1c2b33;letter-spacing:-0.003px;;left:1298.10px;">Amount spent</span><span id="t37" class="t" style="position:absolute;top:291.90px;font-size:15px;font-weight:700;color:#1c2b33;letter-spacing:-0.496px;;left:1454.90px;">Ends</span><span id="t38" class="t" style="position:absolute;top:333.45px;font-size:15.3px;font-weight:400;color:#2768d2;letter-spacing:0.000px;;left:173.60px;transform:scaleX(0.9350);transform-origin:left center;">DO-CA+LLA - (TOF + MOF)- Sneha Sutra - CB...</span><span id="t39" class="t" style="position:absolute;top:333.45px;font-size:15.3px;font-weight:400;color:#414a52;letter-spacing:0.000px;;left:543.10px;transform:scaleX(0.9523);transform-origin:left center;">7-day click, 1-...</span><span id="t40" class="t" style="position:absolute;top:333.45px;font-size:15.3px;font-weight:400;color:#414a52;letter-spacing:0.000px;;right:790.60px;transform:scaleX(0.9550);transform-origin:right center;">—</span><span id="t41" class="t" style="position:absolute;top:356.62px;font-size:12.5px;font-weight:400;color:#8a9098;letter-spacing:0.000px;;right:790.60px;">Website purchase</span><span id="t42" class="t" style="position:absolute;top:333.45px;font-size:15.3px;font-weight:400;color:#414a52;letter-spacing:0.000px;;right:634.70px;transform:scaleX(0.9550);transform-origin:right center;">—</span><span id="t43" class="t" style="position:absolute;top:333.45px;font-size:15.3px;font-weight:400;color:#414a52;letter-spacing:0.000px;;right:478.70px;transform:scaleX(0.9550);transform-origin:right center;">—</span><span id="t44" class="t" style="position:absolute;top:333.45px;font-size:15.3px;font-weight:400;color:#414a52;letter-spacing:0.000px;;right:323.00px;transform:scaleX(0.9550);transform-origin:right center;">—</span><span id="t45" class="t" style="position:absolute;top:356.62px;font-size:12.5px;font-weight:400;color:#8a9098;letter-spacing:0.000px;;right:323.00px;">Per purchase</span><span id="t46" class="t" style="position:absolute;top:333.45px;font-size:15.3px;font-weight:400;color:#414a52;letter-spacing:0.000px;;right:166.30px;transform:scaleX(0.9550);transform-origin:right center;">0.00</span><svg style="position:absolute;left:1398.46px;top:335.70px" width="8" height="11" viewBox="0 0 8 11"><path d="M0.3 0.7H7.7M0.3 3.5H7.7M1 0.7H3C5.2 0.7 5.9 2 5.9 3.4C5.9 5 4.8 6.1 2.8 6.1H1.1L6 10.8" fill="none" stroke="#414a52" stroke-width="1.2"/></svg><span id="t47" class="t" style="position:absolute;top:333.45px;font-size:15.3px;font-weight:400;color:#414a52;letter-spacing:0.000px;;right:45.40px;transform:scaleX(0.9992);transform-origin:right center;">Ongoing</span><span id="t48" class="t" style="position:absolute;top:382.45px;font-size:15.3px;font-weight:400;color:#2768d2;letter-spacing:0.000px;;left:173.60px;transform:scaleX(0.9482);transform-origin:left center;">DO-TOFU- Webinar Reg. (SnehSutra)-30/05/25</span><span id="t49" class="t" style="position:absolute;top:382.45px;font-size:15.3px;font-weight:400;color:#414a52;letter-spacing:0.000px;;left:543.10px;transform:scaleX(0.9523);transform-origin:left center;">7-day click, 1-...</span><span id="t50" class="t" style="position:absolute;top:382.45px;font-size:15.3px;font-weight:400;color:#414a52;letter-spacing:0.000px;text-decoration:underline dotted;text-underline-offset:2px;text-decoration-thickness:1px;right:794.60px;transform:scaleX(0.9550);transform-origin:right center;">299</span><span id="t51" class="t" style="position:absolute;top:405.62px;font-size:12.5px;font-weight:400;color:#8a9098;letter-spacing:0.000px;;right:794.60px;">Website purchases</span><span id="t52" class="t" style="position:absolute;top:382.45px;font-size:15.3px;font-weight:400;color:#414a52;letter-spacing:0.000px;;right:634.70px;transform:scaleX(0.9550);transform-origin:right center;">343,648</span><span id="t53" class="t" style="position:absolute;top:382.45px;font-size:15.3px;font-weight:400;color:#414a52;letter-spacing:0.000px;;right:478.70px;transform:scaleX(0.9550);transform-origin:right center;">920,186</span><span id="t54" class="t" style="position:absolute;top:382.45px;font-size:15.3px;font-weight:400;color:#414a52;letter-spacing:0.000px;text-decoration:underline dotted;text-underline-offset:2px;text-decoration-thickness:1px;right:327.00px;transform:scaleX(0.9550);transform-origin:right center;">942.16</span><div style="position:absolute;left:1221.51px;top:397.60px;width:52.7px;height:0;border-top:1px dotted #414a52"></div><svg style="position:absolute;left:1221.51px;top:384.70px" width="8" height="11" viewBox="0 0 8 11"><path d="M0.3 0.7H7.7M0.3 3.5H7.7M1 0.7H3C5.2 0.7 5.9 2 5.9 3.4C5.9 5 4.8 6.1 2.8 6.1H1.1L6 10.8" fill="none" stroke="#414a52" stroke-width="1.2"/></svg><span id="t55" class="t" style="position:absolute;top:405.62px;font-size:12.5px;font-weight:400;color:#8a9098;letter-spacing:0.000px;;right:327.00px;">Per purchase</span><span id="t56" class="t" style="position:absolute;top:382.45px;font-size:15.3px;font-weight:400;color:#414a52;letter-spacing:0.000px;;right:166.30px;transform:scaleX(0.9550);transform-origin:right center;">281,706.16</span><svg style="position:absolute;left:1353.78px;top:384.70px" width="8" height="11" viewBox="0 0 8 11"><path d="M0.3 0.7H7.7M0.3 3.5H7.7M1 0.7H3C5.2 0.7 5.9 2 5.9 3.4C5.9 5 4.8 6.1 2.8 6.1H1.1L6 10.8" fill="none" stroke="#414a52" stroke-width="1.2"/></svg><span id="t57" class="t" style="position:absolute;top:382.45px;font-size:15.3px;font-weight:400;color:#414a52;letter-spacing:0.000px;;right:45.40px;transform:scaleX(0.9992);transform-origin:right center;">Ongoing</span><span id="t58" class="t" style="position:absolute;top:431.45px;font-size:15.3px;font-weight:400;color:#2768d2;letter-spacing:0.000px;;left:173.60px;transform:scaleX(0.9236);transform-origin:left center;">DO-TOFU- Webinar Reg. (SnehSutra)-CBO- Sca...</span><span id="t59" class="t" style="position:absolute;top:431.45px;font-size:15.3px;font-weight:400;color:#414a52;letter-spacing:0.000px;;left:543.10px;transform:scaleX(0.9523);transform-origin:left center;">7-day click, 1-...</span><span id="t60" class="t" style="position:absolute;top:431.45px;font-size:15.3px;font-weight:400;color:#414a52;letter-spacing:0.000px;text-decoration:underline dotted;text-underline-offset:2px;text-decoration-thickness:1px;right:794.60px;transform:scaleX(0.9550);transform-origin:right center;">25</span><span id="t61" class="t" style="position:absolute;top:454.62px;font-size:12.5px;font-weight:400;color:#8a9098;letter-spacing:0.000px;;right:794.60px;">Website purchases</span><span id="t62" class="t" style="position:absolute;top:431.45px;font-size:15.3px;font-weight:400;color:#414a52;letter-spacing:0.000px;;right:634.70px;transform:scaleX(0.9550);transform-origin:right center;">72,132</span><span id="t63" class="t" style="position:absolute;top:431.45px;font-size:15.3px;font-weight:400;color:#414a52;letter-spacing:0.000px;;right:478.70px;transform:scaleX(0.9550);transform-origin:right center;">104,214</span><span id="t64" class="t" style="position:absolute;top:431.45px;font-size:15.3px;font-weight:400;color:#414a52;letter-spacing:0.000px;text-decoration:underline dotted;text-underline-offset:2px;text-decoration-thickness:1px;right:327.00px;transform:scaleX(0.9550);transform-origin:right center;">1,746.49</span><div style="position:absolute;left:1209.33px;top:446.60px;width:64.9px;height:0;border-top:1px dotted #414a52"></div><svg style="position:absolute;left:1209.33px;top:433.70px" width="8" height="11" viewBox="0 0 8 11"><path d="M0.3 0.7H7.7M0.3 3.5H7.7M1 0.7H3C5.2 0.7 5.9 2 5.9 3.4C5.9 5 4.8 6.1 2.8 6.1H1.1L6 10.8" fill="none" stroke="#414a52" stroke-width="1.2"/></svg><span id="t65" class="t" style="position:absolute;top:454.62px;font-size:12.5px;font-weight:400;color:#8a9098;letter-spacing:0.000px;;right:327.00px;">Per purchase</span><span id="t66" class="t" style="position:absolute;top:431.45px;font-size:15.3px;font-weight:400;color:#414a52;letter-spacing:0.000px;;right:166.30px;transform:scaleX(0.9550);transform-origin:right center;">43,662.17</span><svg style="position:absolute;left:1361.90px;top:433.70px" width="8" height="11" viewBox="0 0 8 11"><path d="M0.3 0.7H7.7M0.3 3.5H7.7M1 0.7H3C5.2 0.7 5.9 2 5.9 3.4C5.9 5 4.8 6.1 2.8 6.1H1.1L6 10.8" fill="none" stroke="#414a52" stroke-width="1.2"/></svg><span id="t67" class="t" style="position:absolute;top:431.45px;font-size:15.3px;font-weight:400;color:#414a52;letter-spacing:0.000px;;right:45.40px;transform:scaleX(0.9992);transform-origin:right center;">Ongoing</span><span id="t68" class="t" style="position:absolute;top:480.45px;font-size:15.3px;font-weight:400;color:#2768d2;letter-spacing:0.000px;;left:173.60px;transform:scaleX(0.9952);transform-origin:left center;">DO- Appointment Reg.-30/06/25</span><span id="t69" class="t" style="position:absolute;top:480.45px;font-size:15.3px;font-weight:400;color:#414a52;letter-spacing:0.000px;;left:543.10px;transform:scaleX(0.9523);transform-origin:left center;">7-day click, 1-...</span><span id="t70" class="t" style="position:absolute;top:480.45px;font-size:15.3px;font-weight:400;color:#414a52;letter-spacing:0.000px;;right:790.60px;transform:scaleX(0.9550);transform-origin:right center;">—</span><span id="t71" class="t" style="position:absolute;top:503.62px;font-size:12.5px;font-weight:400;color:#8a9098;letter-spacing:0.000px;;right:790.60px;">Appointment Booking ...</span><span id="t72" class="t" style="position:absolute;top:480.45px;font-size:15.3px;font-weight:400;color:#414a52;letter-spacing:0.000px;;right:634.70px;transform:scaleX(0.9550);transform-origin:right center;">13,932</span><span id="t73" class="t" style="position:absolute;top:480.45px;font-size:15.3px;font-weight:400;color:#414a52;letter-spacing:0.000px;;right:478.70px;transform:scaleX(0.9550);transform-origin:right center;">37,718</span><span id="t74" class="t" style="position:absolute;top:480.45px;font-size:15.3px;font-weight:400;color:#414a52;letter-spacing:0.000px;;right:323.00px;transform:scaleX(0.9550);transform-origin:right center;">—</span><span id="t75" class="t" style="position:absolute;top:503.62px;font-size:12.5px;font-weight:400;color:#8a9098;letter-spacing:0.000px;;right:323.00px;">Per Appointment Book...</span><span id="t76" class="t" style="position:absolute;top:480.45px;font-size:15.3px;font-weight:400;color:#414a52;letter-spacing:0.000px;;right:166.30px;transform:scaleX(0.9550);transform-origin:right center;">4,298.58</span><svg style="position:absolute;left:1370.03px;top:482.70px" width="8" height="11" viewBox="0 0 8 11"><path d="M0.3 0.7H7.7M0.3 3.5H7.7M1 0.7H3C5.2 0.7 5.9 2 5.9 3.4C5.9 5 4.8 6.1 2.8 6.1H1.1L6 10.8" fill="none" stroke="#414a52" stroke-width="1.2"/></svg><span id="t77" class="t" style="position:absolute;top:480.45px;font-size:15.3px;font-weight:400;color:#414a52;letter-spacing:0.000px;;right:45.40px;transform:scaleX(0.9992);transform-origin:right center;">Ongoing</span><span id="t78" class="t" style="position:absolute;top:529.45px;font-size:15.3px;font-weight:400;color:#2768d2;letter-spacing:0.000px;;left:173.60px;transform:scaleX(0.9428);transform-origin:left center;">DO-MOFU- Webinar Reg. (SnehSutra)-12 June</span><span id="t79" class="t" style="position:absolute;top:529.45px;font-size:15.3px;font-weight:400;color:#414a52;letter-spacing:0.000px;;left:543.10px;transform:scaleX(0.9523);transform-origin:left center;">7-day click, 1-...</span><span id="t80" class="t" style="position:absolute;top:529.45px;font-size:15.3px;font-weight:400;color:#414a52;letter-spacing:0.000px;text-decoration:underline dotted;text-underline-offset:2px;text-decoration-thickness:1px;right:794.60px;transform:scaleX(0.9550);transform-origin:right center;">1</span><span id="t81" class="t" style="position:absolute;top:552.62px;font-size:12.5px;font-weight:400;color:#8a9098;letter-spacing:0.000px;;right:794.60px;">Website purchase</span><span id="t82" class="t" style="position:absolute;top:529.45px;font-size:15.3px;font-weight:400;color:#414a52;letter-spacing:0.000px;;right:634.70px;transform:scaleX(0.9550);transform-origin:right center;">20,172</span><span id="t83" class="t" style="position:absolute;top:529.45px;font-size:15.3px;font-weight:400;color:#414a52;letter-spacing:0.000px;;right:478.70px;transform:scaleX(0.9550);transform-origin:right center;">26,174</span><span id="t84" class="t" style="position:absolute;top:529.45px;font-size:15.3px;font-weight:400;color:#414a52;letter-spacing:0.000px;text-decoration:underline dotted;text-underline-offset:2px;text-decoration-thickness:1px;right:327.00px;transform:scaleX(0.9550);transform-origin:right center;">4,402.49</span><div style="position:absolute;left:1209.33px;top:544.60px;width:64.9px;height:0;border-top:1px dotted #414a52"></div><svg style="position:absolute;left:1209.33px;top:531.70px" width="8" height="11" viewBox="0 0 8 11"><path d="M0.3 0.7H7.7M0.3 3.5H7.7M1 0.7H3C5.2 0.7 5.9 2 5.9 3.4C5.9 5 4.8 6.1 2.8 6.1H1.1L6 10.8" fill="none" stroke="#414a52" stroke-width="1.2"/></svg><span id="t85" class="t" style="position:absolute;top:552.62px;font-size:12.5px;font-weight:400;color:#8a9098;letter-spacing:0.000px;;right:327.00px;">Per purchase</span><span id="t86" class="t" style="position:absolute;top:529.45px;font-size:15.3px;font-weight:400;color:#414a52;letter-spacing:0.000px;;right:166.30px;transform:scaleX(0.9550);transform-origin:right center;">4,402.49</span><svg style="position:absolute;left:1370.03px;top:531.70px" width="8" height="11" viewBox="0 0 8 11"><path d="M0.3 0.7H7.7M0.3 3.5H7.7M1 0.7H3C5.2 0.7 5.9 2 5.9 3.4C5.9 5 4.8 6.1 2.8 6.1H1.1L6 10.8" fill="none" stroke="#414a52" stroke-width="1.2"/></svg><span id="t87" class="t" style="position:absolute;top:529.45px;font-size:15.3px;font-weight:400;color:#414a52;letter-spacing:0.000px;;right:45.40px;transform:scaleX(0.9992);transform-origin:right center;">Ongoing</span><span id="t88" class="t" style="position:absolute;top:578.45px;font-size:15.3px;font-weight:400;color:#2768d2;letter-spacing:0.000px;;left:173.60px;transform:scaleX(0.9704);transform-origin:left center;">DO - Awareness Ads - Webinar- Warmup</span><span id="t89" class="t" style="position:absolute;top:578.45px;font-size:15.3px;font-weight:400;color:#414a52;letter-spacing:0.000px;;left:543.10px;transform:scaleX(0.9756);transform-origin:left center;">7-day click or ...</span><span id="t90" class="t" style="position:absolute;top:578.45px;font-size:15.3px;font-weight:400;color:#414a52;letter-spacing:0.000px;;right:790.60px;transform:scaleX(0.9550);transform-origin:right center;">541,648</span><span id="t91" class="t" style="position:absolute;top:578.45px;font-size:15.3px;font-weight:400;color:#414a52;letter-spacing:0.000px;;right:634.70px;transform:scaleX(0.9550);transform-origin:right center;">541,648</span><span id="t92" class="t" style="position:absolute;top:578.45px;font-size:15.3px;font-weight:400;color:#414a52;letter-spacing:0.000px;;right:478.70px;transform:scaleX(0.9550);transform-origin:right center;">618,967</span><span id="t93" class="t" style="position:absolute;top:578.45px;font-size:15.3px;font-weight:400;color:#414a52;letter-spacing:0.000px;;right:323.00px;transform:scaleX(0.9550);transform-origin:right center;">2.04</span><svg style="position:absolute;left:1241.76px;top:580.70px" width="8" height="11" viewBox="0 0 8 11"><path d="M0.3 0.7H7.7M0.3 3.5H7.7M1 0.7H3C5.2 0.7 5.9 2 5.9 3.4C5.9 5 4.8 6.1 2.8 6.1H1.1L6 10.8" fill="none" stroke="#414a52" stroke-width="1.2"/></svg><span id="t94" class="t" style="position:absolute;top:578.45px;font-size:15.3px;font-weight:400;color:#414a52;letter-spacing:0.000px;;right:166.30px;transform:scaleX(0.9550);transform-origin:right center;">1,105.79</span><svg style="position:absolute;left:1370.03px;top:580.70px" width="8" height="11" viewBox="0 0 8 11"><path d="M0.3 0.7H7.7M0.3 3.5H7.7M1 0.7H3C5.2 0.7 5.9 2 5.9 3.4C5.9 5 4.8 6.1 2.8 6.1H1.1L6 10.8" fill="none" stroke="#414a52" stroke-width="1.2"/></svg><span id="t95" class="t" style="position:absolute;top:578.45px;font-size:15.3px;font-weight:400;color:#414a52;letter-spacing:0.000px;;right:45.40px;transform:scaleX(0.9992);transform-origin:right center;">Ongoing</span><span id="t96" class="t" style="position:absolute;top:610.25px;font-size:15.3px;font-weight:400;color:#3d4850;letter-spacing:0.000px;;left:178.00px;transform:scaleX(0.9517);transform-origin:left center;">Results from 6 campaigns</span>
</body></html>
